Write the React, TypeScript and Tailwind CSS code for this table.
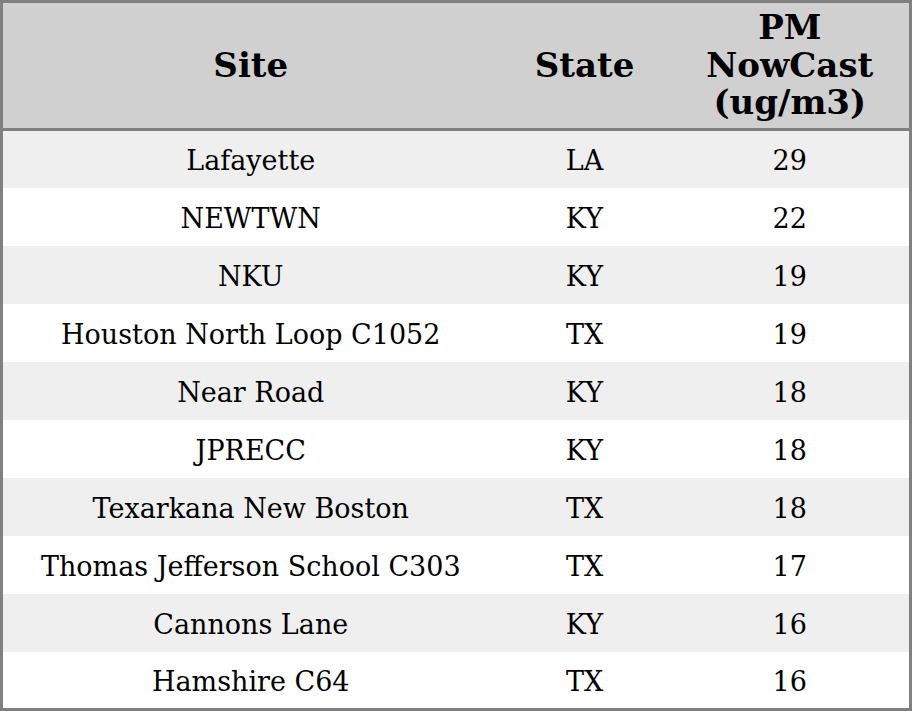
const rows: [string, string, string][] = [
  ["Lafayette", "LA", "29"],
  ["NEWTWN", "KY", "22"],
  ["NKU", "KY", "19"],
  ["Houston North Loop C1052", "TX", "19"],
  ["Near Road", "KY", "18"],
  ["JPRECC", "KY", "18"],
  ["Texarkana New Boston", "TX", "18"],
  ["Thomas Jefferson School C303", "TX", "17"],
  ["Cannons Lane", "KY", "16"],
  ["Hamshire C64", "TX", "16"],
];

export default function App() {
  return (
    <div className="w-[912px] h-[711px] bg-white" style={{ fontFamily: '"DejaVu Serif", serif' }}>
      <table className="w-[912px] border-[3px] border-[#808080] border-collapse table-fixed text-black">
        <colgroup>
          <col className="w-[497px]" />
          <col className="w-[172px]" />
          <col />
        </colgroup>
        <thead>
          <tr className="bg-[#d0d0d0] h-[128px] border-b-[3px] border-[#808080]">
            <th className="text-[34px] leading-[37.5px] font-bold text-center">Site</th>
            <th className="text-[34px] leading-[37.5px] font-bold text-center">State</th>
            <th className="text-[34px] leading-[37.5px] font-bold text-center">
              PM
              <br />
              NowCast
              <br />
              (ug/m3)
            </th>
          </tr>
        </thead>
        <tbody>
          {rows.map((r, i) => (
            <tr key={i} className={i % 2 === 0 ? "bg-[#efefef] h-[58px]" : "bg-white h-[58px]"}>
              <td className="pt-1 text-[27px] leading-[32px] text-center">{r[0]}</td>
              <td className="pt-1 text-[27px] leading-[32px] text-center">{r[1]}</td>
              <td className="pt-1 text-[27px] leading-[32px] text-center">{r[2]}</td>
            </tr>
          ))}
        </tbody>
      </table>
    </div>
  );
}
